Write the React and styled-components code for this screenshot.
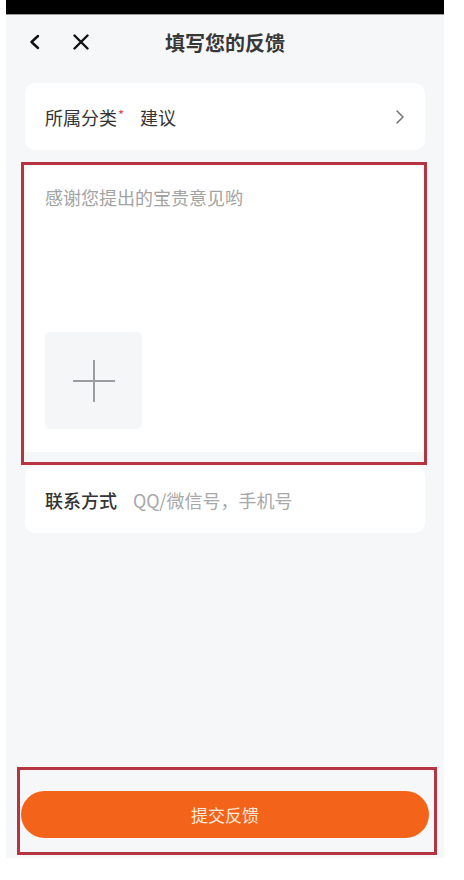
import React from "react";
import styled, { createGlobalStyle } from "styled-components";

const GlobalStyle = createGlobalStyle`
  html, body {
    margin: 0;
    padding: 0;
    background: #ffffff;
  }
  body {
    font-family: "Noto Sans CJK SC", "Noto Sans", sans-serif;
  }
`;

const Phone = styled.div`
  width: 438px;
  height: 858px;
  margin-left: 6px;
  background-color: #f6f7f9;
  display: flex;
  flex-direction: column;
`;

const StatusBar = styled.div`
  height: 14px;
  background: #000;
  border-bottom: 1px solid #9a9a9a;
`;

const NavBar = styled.div`
  height: 54px;
  display: flex;
  align-items: center;
  position: relative;
  padding-left: 22px;
  gap: 30px;
`;

const NavButton = styled.span`
  display: flex;
  align-items: center;
  justify-content: center;
  width: ${props => props.size || 16}px;
  height: 20px;
`;

const Title = styled.h1`
  position: absolute;
  left: 0;
  right: 0;
  top: 0;
  bottom: 0;
  margin: 0;
  display: flex;
  align-items: center;
  justify-content: center;
  font-size: 20px;
  font-weight: 700;
  color: #383838;
  pointer-events: none;
`;

const Content = styled.div`
  flex: 1;
  display: flex;
  flex-direction: column;
  padding-top: 14px;
`;

const Card = styled.div`
  background: #fff;
  border-radius: 10px;
  margin: ${props => props.margin || "0 19px"};
  height: ${props => props.height}px;
  box-sizing: border-box;
  padding: 0 20px;
`;

const Row = styled.div`
  height: 100%;
  display: flex;
  align-items: center;
  font-size: 18px;
  color: #333;
`;

const Label = styled.span`
  font-weight: ${props => (props.bold ? 500 : 400)};
  color: #333;
`;

const Required = styled.sup`
  color: #e5404a;
  font-size: 13px;
  margin-left: 1px;
  position: relative;
  top: -2px;
`;

const Value = styled.span`
  margin-left: ${props => props.gap || 16}px;
  color: ${props => (props.muted ? "#a8a8a8" : "#333")};
  flex: 1;
`;

const Highlight = styled.div`
  border: 3px solid #b5343f;
  margin: ${props => props.margin};
  padding: ${props => props.pad};
`;

const FeedbackCard = styled.div`
  background: #fff;
  border-radius: 10px 10px 0 0;
  height: 287px;
  box-sizing: border-box;
  padding: 20px 20px 0;
  display: flex;
  flex-direction: column;
`;

const Placeholder = styled.div`
  font-size: 18px;
  color: #a3a3a3;
  line-height: 24px;
  height: 147px;
`;

const AddTile = styled.div`
  width: 97px;
  height: 97px;
  border-radius: 5px;
  background: #f5f6f8;
  display: flex;
  align-items: center;
  justify-content: center;
`;

const GapStrip = styled.div`
  height: 10px;
  background: #f6f7f9;
`;

const Spacer = styled.div`
  flex: 1;
`;

const SubmitButton = styled.button`
  width: 100%;
  height: 47px;
  border: 0;
  border-radius: 24px;
  background: #f4631a;
  color: #fbe9dc;
  font-family: "Noto Sans CJK SC", "Noto Sans", sans-serif;
  font-size: 17px;
  display: block;
`;

function App() {
  return (
    <>
      <GlobalStyle />
      <Phone>
        <StatusBar />
        <NavBar>
          <NavButton size={14}>
            <svg width="14" height="16" viewBox="0 0 14 16">
              <path d="M10 2 L3.5 8 L10 14" fill="none" stroke="#111" strokeWidth="2.4" strokeLinecap="round" strokeLinejoin="round" />
            </svg>
          </NavButton>
          <NavButton size={18}>
            <svg width="18" height="16" viewBox="0 0 18 16">
              <path d="M2.5 1.5 L15.5 14.5 M15.5 1.5 L2.5 14.5" fill="none" stroke="#111" strokeWidth="2.4" strokeLinecap="round" />
            </svg>
          </NavButton>
          <Title>填写您的反馈</Title>
        </NavBar>
        <Content>
          <Card height={67}>
            <Row>
              <Label>所属分类</Label>
              <Required>*</Required>
              <Value gap={16}>建议</Value>
              <svg width="10" height="16" viewBox="0 0 10 16">
                <path d="M2 2 L8 8 L2 14" fill="none" stroke="#777" strokeWidth="1.6" strokeLinecap="round" strokeLinejoin="round" />
              </svg>
            </Row>
          </Card>
          <Highlight margin="12px 17px 0 15px" pad="0 0 0 1px">
            <FeedbackCard>
              <Placeholder>感谢您提出的宝贵意见哟</Placeholder>
              <AddTile>
                <svg width="44" height="44" viewBox="0 0 44 44">
                  <path d="M22 1 V43 M1 22 H43" stroke="#9b9da2" strokeWidth="2" fill="none" />
                </svg>
              </AddTile>
            </FeedbackCard>
            <GapStrip />
          </Highlight>
          <Card height={67} margin="1px 19px 0">
            <Row>
              <Label bold>联系方式</Label>
              <Value muted gap={16}>QQ/微信号，手机号</Value>
            </Row>
          </Card>
          <Spacer />
          <Highlight margin="0 7px 3px 11px" pad="21px 5px 14px 1px">
            <SubmitButton>提交反馈</SubmitButton>
          </Highlight>
        </Content>
      </Phone>
    </>
  );
}

export default App;
